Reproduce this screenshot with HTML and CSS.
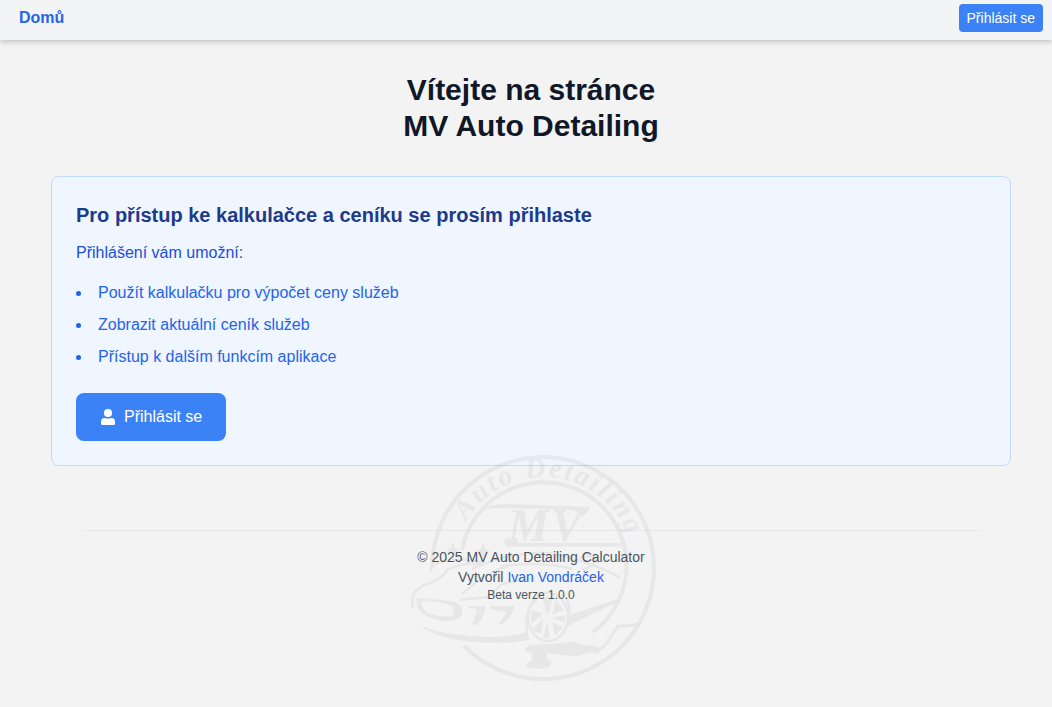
FILE: index.html
```html
<!DOCTYPE html>
<html lang="cs">
<head>
<meta charset="utf-8">
<title>MV Auto Detailing</title>
<link rel="stylesheet" href="styles.css">
</head>
<body>
<nav class="navbar">
  <a class="nav-home" href="#">Domů</a>
  <a class="nav-login" href="#">Přihlásit se</a>
</nav>
<main class="page">
  <h1 class="title">Vítejte na stránce<br>MV Auto Detailing</h1>
  <section class="card">
    <h2 class="card-title">Pro přístup ke kalkulačce a ceníku se prosím přihlaste</h2>
    <p class="card-lead">Přihlášení vám umožní:</p>
    <ul class="features">
      <li>Použít kalkulačku pro výpočet ceny služeb</li>
      <li>Zobrazit aktuální ceník služeb</li>
      <li>Přístup k dalším funkcím aplikace</li>
    </ul>
    <a class="login" href="#">
      <svg class="login-icon" viewBox="0 0 16 18"><circle cx="8" cy="5" r="4.100"/><path d="M1 15.500V14Q1 10 4.500 10Q8 11.200 11.500 10Q15 10 15 14V15.500Q15 17 13.500 17H2.500Q1 17 1 15.500Z"/></svg>
      <span>Přihlásit se</span>
    </a>
  </section>
  <footer class="footer">
    <p class="copyright">© 2025 MV Auto Detailing Calculator</p>
    <p class="author">Vytvořil <a class="author-link" href="#">Ivan Vondráček</a></p>
    <p class="version">Beta verze 1.0.0</p>
  </footer>
</main>
<svg class="watermark" viewBox="400 440 270 250">
  <defs><path id="arc" d="M466.500 521A89.500 89.500 0 0 1 630 543"/></defs>
  <!-- badge rings -->
  <g class="line ring">
    <path d="M432 568A111 111 0 1 1 464 646"/>
    <path d="M462 550A83 83 0 1 1 593 632"/>
  </g>
  <text class="arc-text"><textPath href="#arc" textLength="201">Auto Detailing</textPath></text>
  <text class="monogram" x="508" y="541" textLength="74">MV</text>
  <!-- banner strokes and stars -->
  <path d="M480 510Q490 504 505 504L590 507Q589 512 582 517Q580 511 570 510L505 508Q490 508 480 510ZM505 539L516 537L518 543L624 543V546.500H507Q503 544 505 539ZM453 541L455 548L461 550L455 552L453 559L451 552L445 550L451 548ZM483 542L485 549L491 551L485 553L483 560L481 553L475 551L481 549Z"/>
  <!-- car body -->
  <path fill-rule="evenodd" d="M417 598Q440 599 455 602Q464 606 462 614Q458 622 445 621Q425 618 420 611Q416 606 417 598ZM421 601Q422 609 428 613Q440 618 452 616Q456 608 450 605Q438 601 421 601Z"/>
  <path d="M468 606H486Q484 618 477 625L472 624Q477 614 476 609L468 608ZM490 606H514Q513 618 501 625L499 623L507 612L490 609ZM421 626Q450 637 495 637Q520 636 528 631L529 640Q500 645 465 641Q435 637 421 626ZM569 615L618 599V602L572 624L567 627Z"/>
  <g class="line body-line">
    <path d="M413 608Q409 592 424 585Q442 580 447 570Q462 562 485 564M431 572Q430 563 445 561Q465 558 482 562M460 600L488 597L502 584L535 578M462 594Q487 572 508 566M472 569Q515 549 555 554Q600 565 620 578M527 631Q525 606 537 600M564 595Q573 608 567 624M580 558Q590 553 596 559Q595 566 582 570M500 566Q545 561 572 569"/>
  </g>
  <!-- wheel -->
  <ellipse class="line body-line" cx="548" cy="617" rx="20" ry="24"/>
  <path d="M543 597L553 596L549 613H546ZM556 600L564 610L552 615ZM565 615V622L552 618ZM552 622L563 627L555 636ZM547 621L550 638H543ZM543 619L541 634L531 630ZM543 614L531 624V610Z"/>
  <!-- polisher with cable -->
  <path d="M525 648L530 645L547 644L573 642Q582 644 589 646L597 646L600 650L598 654L590 652.500L578 656L561 655L547 653V659L552 662L549 667Q538 670 527 667L526 664L532 660V653L526 652Z"/>
  <path class="line cable" d="M598 650Q606 646 609 639L618 626Q629 627 640 623"/>
</svg>
</body>
</html>
```
FILE: styles.css
```css
* { box-sizing: border-box; margin: 0; padding: 0; }
body { min-height: 707px; background: #f3f3f3; color: #101828; font-family: "Liberation Sans", Arial, sans-serif; font-size: 16px; line-height: 24px; overflow: hidden; }
a { text-decoration: none; }
.navbar { display: flex; justify-content: space-between; align-items: flex-start; height: 40px; padding: 4px 9px 0 19px; background: #f3f4f6; box-shadow: 0 2px 5px rgba(0,0,0,.2); }
.nav-home { margin-top: 2px; color: #2563eb; font-weight: 700; }
.nav-login { height: 28px; padding: 4px 8px; border-radius: 4px; background: #3b82f6; color: #fff; font-size: 14px; line-height: 20px; }
.page { width: 960px; margin: 0 0 0 51px; padding-top: 32px; }
.title { margin-bottom: 32px; text-align: center; font-size: 30px; line-height: 36px; }
.card { height: 290px; padding: 24px; border: 1px solid #bfdbfe; border-radius: 8px; background: #eff6ff; }
.card-title { margin-bottom: 12px; color: #1e3a8a; font-size: 20px; line-height: 28px; }
.card-lead { margin-bottom: 16px; color: #1d4ed8; }
.features { margin-bottom: 24px; color: #2563eb; list-style-position: inside; }
.features li + li { margin-top: 8px; }
.login { display: inline-flex; align-items: center; gap: 8px; width: 150px; height: 48px; padding: 0 0 0 24px; border-radius: 8px; background: #3b82f6; color: #fff; white-space: nowrap; }
.login-icon { width: 16px; height: 18px; fill: #fff; }
.footer { margin: 64px 32px 0; padding-top: 16px; border-top: 1px solid #e5e7eb; color: #4b5563; text-align: center; font-size: 14px; line-height: 20px; }
.author-link { color: #2563eb; }
.version { font-size: 12px; line-height: 16px; }
.watermark { position: absolute; left: 400px; top: 440px; width: 270px; height: 250px; opacity: .042; pointer-events: none; }
.line { fill: none; stroke: #000; }
.ring { stroke-width: 4; }
.body-line { stroke-width: 2.5; }
.cable { stroke-width: 3; }
.arc-text { font: italic 700 28px "Liberation Serif", serif; }
.monogram { font: italic 700 46px "Liberation Serif", serif; }
```
